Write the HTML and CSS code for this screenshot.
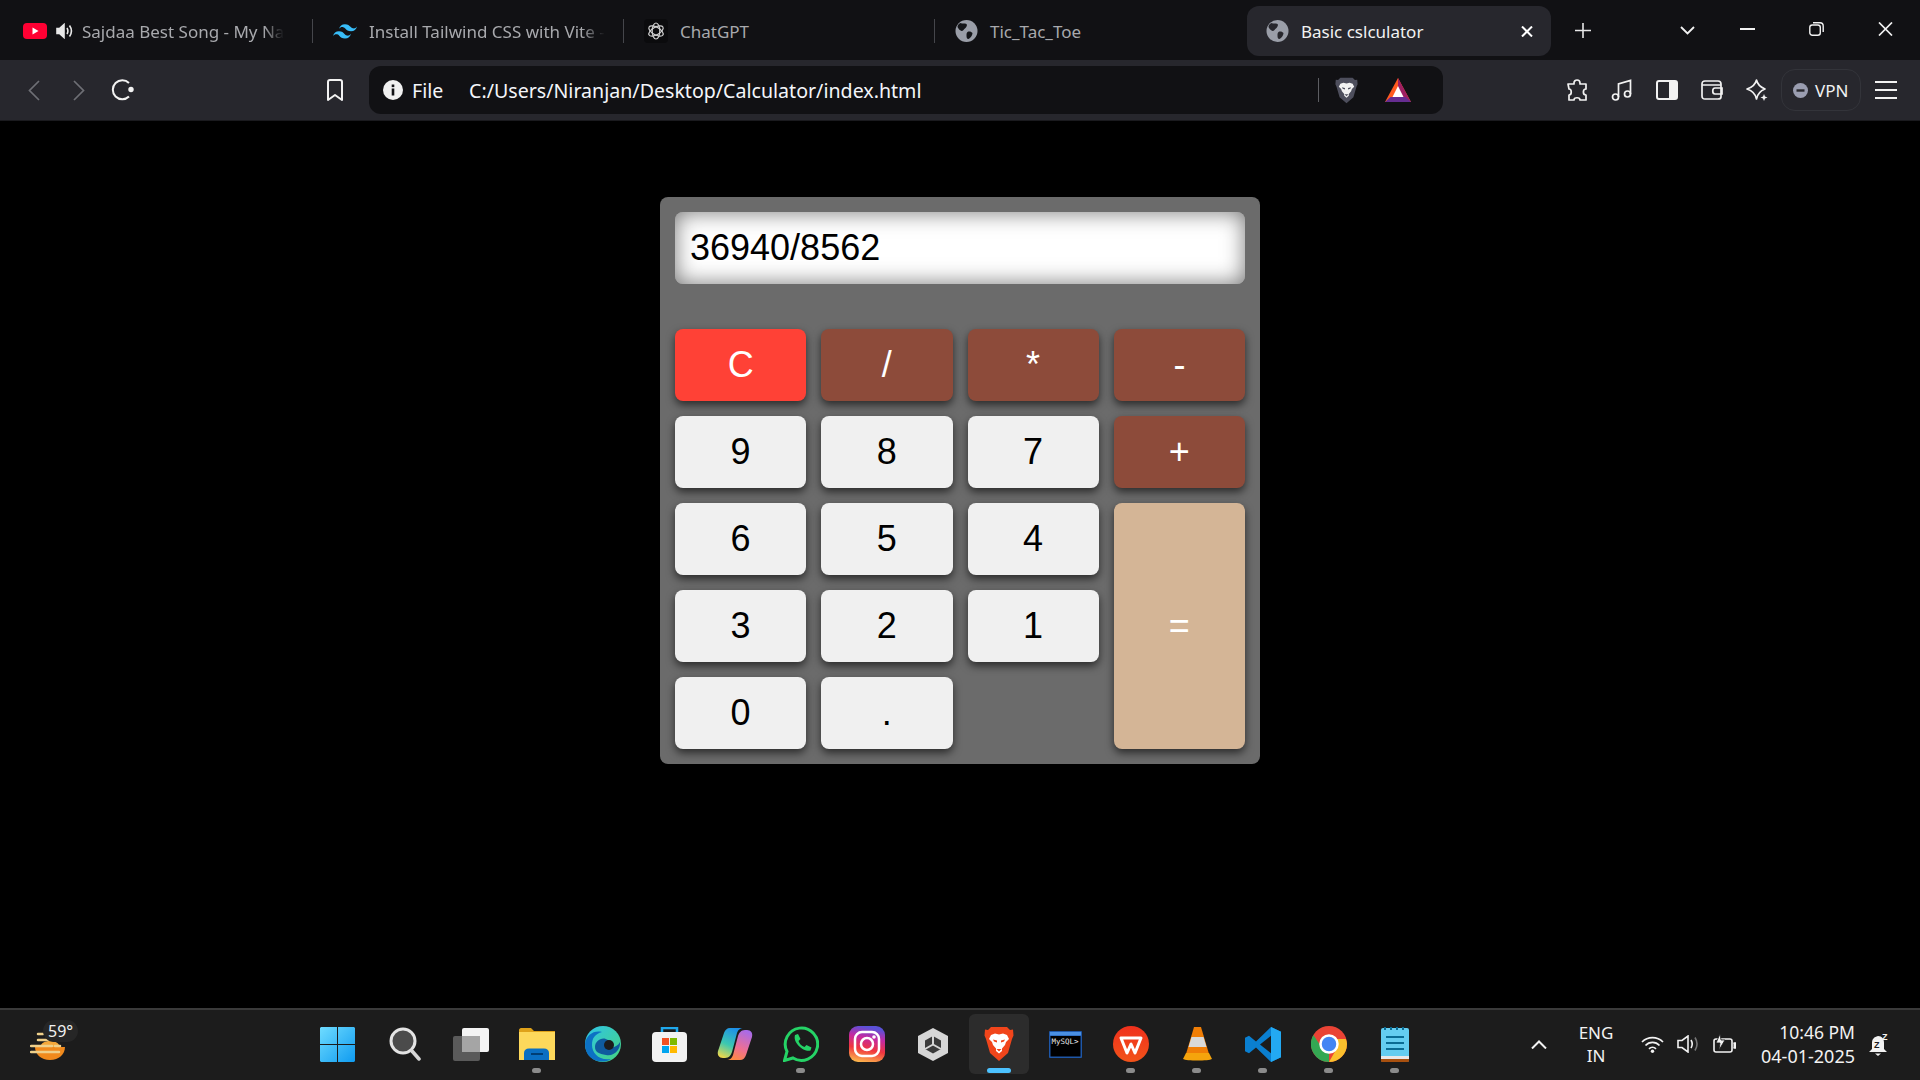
FILE: index.html
```html
<!DOCTYPE html>
<html lang="en">
<head>
  <meta charset="UTF-8">
  <title>Basic cslculator</title>
  <link rel="stylesheet" href="styles.css">
</head>
<body>
  <!-- browser tabs -->
  <header class="tabbar">
    <div class="tab">
      <svg class="favicon" width="24" height="16" viewBox="0 0 24 16"><rect width="24" height="16" rx="4" fill="#ff0033"/><path d="M9.500 4.500v7l6-3.500z" fill="#fff"/></svg>
      <svg class="speaker" width="18" height="16" viewBox="0 0 18 16" fill="none" stroke="#e8e8e8" stroke-width="1.600"><path d="M1 5.500h2.500L8 1.500v13l-4.500-4H1z" fill="#e8e8e8"/><path d="M11 5c1.200 2 1.200 4 0 6M13.500 2.500c2.400 3.400 2.400 7.600 0 11"/></svg>
      <span class="tab-title tab-fade">Sajdaa Best Song - My Na</span>
    </div>
    <div class="tab">
      <svg class="favicon" width="24" height="15" viewBox="0 0 54 33"><path fill="#38bdf8" d="M27 0c-7.200 0-11.700 3.600-13.500 10.800 2.700-3.600 5.850-4.950 9.450-4.050 2.054.513 3.522 2.004 5.147 3.653C30.744 13.090 33.808 16.200 40.500 16.200c7.200 0 11.700-3.600 13.500-10.800-2.700 3.600-5.850 4.950-9.450 4.050-2.054-.513-3.522-2.004-5.147-3.653C36.756 3.110 33.692 0 27 0zM13.500 16.200C6.300 16.200 1.800 19.800 0 27c2.700-3.600 5.850-4.950 9.450-4.050 2.054.514 3.522 2.004 5.147 3.653C17.244 29.290 20.308 32.400 27 32.400c7.200 0 11.700-3.600 13.500-10.800-2.700 3.600-5.850 4.950-9.450 4.050-2.054-.513-3.522-2.004-5.147-3.653C23.256 19.310 20.192 16.200 13.500 16.200z"/></svg>
      <span class="tab-title tab-fade">Install Tailwind CSS with Vite -</span>
    </div>
    <div class="tab">
      <svg class="favicon" width="24" height="24" viewBox="0 0 24 24" fill="none" stroke="#d0d0d0" stroke-width="1.200"><rect width="24" height="24" rx="4" fill="#0b0b0d" stroke="none"/><ellipse cx="12" cy="12" rx="3.800" ry="8"/><ellipse cx="12" cy="12" rx="3.800" ry="8" transform="rotate(60 12 12)"/><ellipse cx="12" cy="12" rx="3.800" ry="8" transform="rotate(120 12 12)"/></svg>
      <span class="tab-title">ChatGPT</span>
    </div>
    <div class="tab">
      <svg class="favicon" width="23" height="22" viewBox="0 0 22 22"><circle cx="11" cy="11" r="11" fill="#9a9ea8"/><path d="M5 3c2 1 4 0 6 1 1 1 0 3-1 4-2 1-2 3-4 3-2-1-3-2-4-4 0-2 1-3 3-4zM12 12c2-1 4 0 5 1 0 2-2 5-4 6-2 0-2-2-2-4 0-1 0-2 1-3z" fill="#15161a"/></svg>
      <span class="tab-title">Tic_Tac_Toe</span>
    </div>
    <div class="tab tab-active">
      <svg class="favicon" width="23" height="22" viewBox="0 0 22 22"><circle cx="11" cy="11" r="11" fill="#9a9ea8"/><path d="M5 3c2 1 4 0 6 1 1 1 0 3-1 4-2 1-2 3-4 3-2-1-3-2-4-4 0-2 1-3 3-4zM12 12c2-1 4 0 5 1 0 2-2 5-4 6-2 0-2-2-2-4 0-1 0-2 1-3z" fill="#27272d"/></svg>
      <span class="tab-title">Basic cslculator</span>
      <svg class="tab-close" width="12" height="11" viewBox="0 0 12 11" stroke="#fff" stroke-width="2"><path d="M1 .5l10 10M11 .5l-10 10"/></svg>
    </div>
    <svg class="new-tab" width="16" height="15" viewBox="0 0 16 15" stroke="#e8e8e8" stroke-width="1.600"><path d="M8 0v15M0 7.500h16"/></svg>
    <svg class="tab-list" width="15" height="9" viewBox="0 0 15 9" fill="none" stroke="#f2f2f2" stroke-width="1.800"><path d="M1 1l6.500 6.500L14 1"/></svg>
    <div class="win-controls">
      <svg width="15" height="2" viewBox="0 0 15 2"><rect width="15" height="2" fill="#f2f2f2"/></svg>
      <svg width="15" height="14" viewBox="0 0 15 14" fill="none" stroke="#f2f2f2" stroke-width="1.400"><rect x=".8" y="3" width="10.500" height="10.300" rx="2.500"/><path d="M4 .8h7c2 0 3.200 1.200 3.200 3.200v6"/></svg>
      <svg width="15" height="14" viewBox="0 0 15 14" stroke="#f2f2f2" stroke-width="1.700"><path d="M1 .5l13 13M14 .5l-13 13"/></svg>
    </div>
  </header>

  <!-- address bar row -->
  <nav class="toolbar">
    <svg class="nav-back" width="12" height="21" viewBox="0 0 12 21" fill="none" stroke="#6e6f75" stroke-width="1.700"><path d="M11 1L1.500 10.500 11 20"/></svg>
    <svg class="nav-forward" width="12" height="21" viewBox="0 0 12 21" fill="none" stroke="#6e6f75" stroke-width="1.700"><path d="M1 1l9.500 9.500L1 20"/></svg>
    <svg class="nav-reload" width="24" height="22" viewBox="0 0 24 22" fill="none" stroke="#f2f2f2" stroke-width="2"><path d="M18 17.500A9.500 9.500 0 1 1 18 4"/><circle cx="20" cy="10.500" r="2.700" fill="#f2f2f2" stroke="none"/></svg>
    <svg class="nav-bookmark" width="16" height="23" viewBox="0 0 16 23" fill="none" stroke="#f2f2f2" stroke-width="2"><path d="M3 1h10c1 0 2 1 2 2v18l-7-5-7 5V3c0-1 1-2 2-2z" stroke-linejoin="round"/></svg>
    <div class="addressbar">
      <svg class="info-icon" width="20" height="20" viewBox="0 0 20 20"><circle cx="10" cy="10" r="10" fill="#f0f0f0"/><rect x="8.700" y="8.500" width="2.600" height="7" fill="#111114"/><rect x="8.700" y="4.500" width="2.600" height="2.600" fill="#111114"/></svg>
      <span class="scheme">File</span>
      <span class="url">C:/Users/Niranjan/Desktop/Calculator/index.html</span>
      <span class="addr-sep"></span>
      <svg class="shield" width="23" height="27" viewBox="0 0 30 36" preserveAspectRatio="none"><path d="M7 1h16l3 3 3-.5.5 6L28 13l-4 14-9 8-9-8L2 13 .5 9.500 1 3.500 4 4z" fill="#4d4e5c"/><path d="M7 9l4-1.500 4 1 4-1 4 1.500 2 4-3 3-1 3-3 3.500v2.500l-3 2.500-3-2.500v-2.500L9 19l-1-3-3-3z" fill="#f2f2f2"/><path d="M9 13.500l4 1v2l-3-1zM21 13.500l-4 1v2l3-1zM12.500 23h5L15 25.500z" fill="#4d4e5c"/></svg>
      <svg class="bat" width="26" height="24" viewBox="0 0 26 24"><path d="M13 0L0 24h26z" fill="#ff5a1f"/><path d="M13 0l13 24H13z" fill="#9e1f63"/><path d="M0 24l5.500-5h15l5.500 5z" fill="#662d91"/><path d="M13 8l5.500 11h-11z" fill="#fff"/></svg>
    </div>
    <div class="tools">
      <svg width="22" height="22" viewBox="0 0 22 22" fill="none" stroke="#f2f2f2" stroke-width="1.700" stroke-linejoin="round"><path d="M8 4c0-4 6-4 6 0v1h6v5c-3.500 0-3.500 6 0 6v5h-6c0-3-6-3-6 0H3v-5c3 0 3-6 0-6L2 5h6z"/></svg>
      <svg width="22" height="22" viewBox="0 0 22 22" fill="none" stroke="#f2f2f2" stroke-width="1.700"><circle cx="4.500" cy="18" r="3"/><circle cx="16.500" cy="15" r="3"/><path d="M7.500 18V5l12-3.500V15"/></svg>
      <svg width="22" height="20" viewBox="0 0 22 20"><rect x="1" y="1" width="20" height="18" rx="2" fill="none" stroke="#f2f2f2" stroke-width="2"/><rect x="13" y="1" width="8" height="18" fill="#f2f2f2"/></svg>
      <svg width="22" height="20" viewBox="0 0 22 20" fill="none" stroke="#f2f2f2" stroke-width="1.700"><path d="M4 1h13c2 0 3 1 3 3v13c0 1-1 2-3 2H4c-2 0-3-1-3-3V4c0-2 1-3 3-3zM1 5h19M21 8h-7c-3 0-3 6 0 6h7z"/></svg>
      <svg width="22" height="22" viewBox="0 0 22 22" fill="none" stroke="#f2f2f2" stroke-width="1.700" stroke-linejoin="round"><path d="M10.500 1c1 4.500 3.500 7 8.500 9-5 2-7.500 4.500-8.500 10-1-5.500-3.500-8-9.500-10 6-2 8.500-4.500 9.500-9z"/><path d="M18 15l1 2.500 2.500 1-2.500 1-1 2.500-1-2.500-2.500-1 2.500-1z" fill="#f2f2f2" stroke="none"/></svg>
    </div>
    <div class="vpn-pill">
      <svg width="15" height="15" viewBox="0 0 15 15"><circle cx="7.500" cy="7.500" r="7.500" fill="#9a9db0"/><rect x="3.500" y="6.300" width="8" height="2.400" fill="#27272d"/></svg>
      <span>VPN</span>
    </div>
    <svg class="menu-icon" width="22" height="18" viewBox="0 0 22 18" stroke="#f2f2f2" stroke-width="2"><path d="M0 1h22M0 9h22M0 17h22"/></svg>
  </nav>

  <!-- the page itself -->
  <main class="page">
    <div class="calculator">
      <div class="display">36940/8562</div>
      <div class="keys">
        <button class="key key-clear">C</button>
        <button class="key key-op">/</button>
        <button class="key key-op">*</button>
        <button class="key key-op">-</button>
        <button class="key">9</button>
        <button class="key">8</button>
        <button class="key">7</button>
        <button class="key key-op">+</button>
        <button class="key">6</button>
        <button class="key">5</button>
        <button class="key">4</button>
        <button class="key key-equals">=</button>
        <button class="key">3</button>
        <button class="key">2</button>
        <button class="key">1</button>
        <button class="key">0</button>
        <button class="key">.</button>
      </div>
    </div>
  </main>

  <!-- windows taskbar -->
  <footer class="taskbar">
    <div class="weather">
      <svg width="36" height="29" viewBox="0 0 36 29"><path d="M5 15h30c0 7-6 13-15 13S5 22 5 15z" fill="#f08a1d"/><path d="M10 15c1-4 5-6 10-6s9 2 10 6z" fill="#f5a83a"/><g stroke="#efd08a" stroke-width="2.500" stroke-linecap="round"><path d="M8 2h5M8 8h10M1 14h21M1 20h28M25 14h5"/></g></svg>
      <span class="temp">59°</span>
    </div>
    <div class="apps">
      <div class="app app-start">
        <svg width="35" height="35" viewBox="0 0 35 35"><defs><linearGradient id="win" x1="0" y1="0" x2="1" y2="1"><stop offset="0" stop-color="#6fdcff"/><stop offset="1" stop-color="#0f9bf0"/></linearGradient></defs><path d="M1 0h16v17H0V1zM18 0h16l1 1v16H18zM0 18h17v17H1l-1-1zM18 18h17v16l-1 1H18z" fill="url(#win)"/></svg>
      </div>
      <div class="app">
        <svg width="32" height="34" viewBox="0 0 32 34"><circle cx="14" cy="14" r="12" fill="#4b4b4b" stroke="#e4e4e4" stroke-width="3"/><path d="M23 24l7 8" stroke="#d8d8d8" stroke-width="3.500" stroke-linecap="round"/></svg>
      </div>
      <div class="app">
        <svg width="36" height="33" viewBox="0 0 36 33"><rect y="8" width="27" height="25" rx="2" fill="#5a5a5a"/><rect x="9" width="27" height="24" rx="2" fill="#f4f4f4"/><rect x="9" y="8" width="18" height="16" fill="#a5a5a5"/></svg>
      </div>
      <div class="app app-open">
        <svg width="36" height="32" viewBox="0 0 36 32"><path d="M0 2c0-1 1-2 2-2h10l3 3h21v29H0z" fill="#dfa21a"/><rect y="4" width="36" height="28" fill="#fdd85b"/><path d="M5 32v-7c0-3 2-4.500 5-4.500h15c3 0 5 1.500 5 4.500v7z" fill="#0a6fc2"/><rect x="12" y="25" width="12" height="2" fill="#003e74"/></svg>
      </div>
      <div class="app">
        <svg width="36" height="36" viewBox="0 0 36 36"><defs><linearGradient id="edge" x1="0" y1="0" x2="1" y2="1"><stop offset="0" stop-color="#2fc4e8"/><stop offset="1" stop-color="#46d480"/></linearGradient></defs><circle cx="18" cy="18" r="18" fill="url(#edge)"/><path d="M0 18C1 9 9 4 17 6c-7 2-10 6-10 13 0 8 7 16 19 14-9 6-26 2-26-15z" fill="#0c71c4"/><path d="M10 21c0-7 8-11 13-7 3 2 3 6 1 7 5 1 9-1 11-5 1 7-6 15-14 13-7-1-11-3-11-8z" fill="#0f5b9e"/><circle cx="24" cy="19" r="5" fill="#1c1c1c"/></svg>
      </div>
      <div class="app">
        <svg width="35" height="35" viewBox="0 0 35 35"><path d="M10 5V1h15v4" fill="none" stroke="#1fa8ec" stroke-width="2.500"/><rect y="5" width="35" height="30" rx="4" fill="#f2f2f2"/><rect x="10" y="11" width="7" height="7" fill="#f25022"/><rect x="18" y="11" width="7" height="7" fill="#7fba00"/><rect x="10" y="19" width="7" height="7" fill="#00a4ef"/><rect x="18" y="19" width="7" height="7" fill="#ffb900"/></svg>
      </div>
      <div class="app">
        <svg width="36" height="34" viewBox="0 0 36 34"><defs><linearGradient id="cop1" x1=".6" y1="0" x2=".2" y2="1"><stop offset="0" stop-color="#1e90e8"/><stop offset=".55" stop-color="#3cc8b0"/><stop offset="1" stop-color="#f0d84a"/></linearGradient><linearGradient id="cop2" x1=".7" y1="0" x2=".3" y2="1"><stop offset="0" stop-color="#a86be8"/><stop offset=".6" stop-color="#f07090"/><stop offset="1" stop-color="#ff8a40"/></linearGradient></defs><path d="M13 1h14c-4 0-6 2-7 5l-5 19c-1 3-3 6-7 6H6c-4 0-6-3-5-7L7 6c1-3 3-5 6-5z" fill="url(#cop1)"/><path d="M23 33H9c4 0 6-2 7-5l5-19c1-3 3-6 7-6h2c4 0 6 3 5 7l-6 18c-1 3-3 5-6 5z" fill="url(#cop2)"/></svg>
      </div>
      <div class="app app-open">
        <svg width="36" height="36" viewBox="0 0 36 36"><path d="M1.500 34.500l2.500-9A16.200 16.200 0 1 1 10 32z" fill="none" stroke="#25d366" stroke-width="3"/><path d="M12 9l3-1 2.500 5-2 2c1 3 3 5 6 6l2-2 5 2.500-1 3c-6 2-18-7-15.500-15.500z" fill="#25d366"/></svg>
      </div>
      <div class="app">
        <svg width="36" height="36" viewBox="0 0 36 36"><defs><linearGradient id="ig" x1=".15" y1="1" x2=".35" y2="0"><stop offset="0" stop-color="#fdc04d"/><stop offset=".4" stop-color="#f0353f"/><stop offset=".72" stop-color="#c32aa3"/><stop offset="1" stop-color="#5b51d8"/></linearGradient></defs><rect width="36" height="36" rx="9" fill="url(#ig)"/><rect x="6" y="6" width="24" height="24" rx="7" fill="none" stroke="#fff" stroke-width="2.500"/><circle cx="18" cy="18" r="6" fill="none" stroke="#fff" stroke-width="2.500"/><circle cx="25" cy="11" r="1.800" fill="#fff"/></svg>
      </div>
      <div class="app">
        <svg width="30" height="33" viewBox="0 0 30 33"><path d="M15 0l15 8v17l-15 8-15-8V8z" fill="#d6d6d6"/><path d="M15 8l8 4.500v8.500l-8 4.500L7 21v-8.500z" fill="#3a3a3a"/><path d="M15 8v8.500l8 4.500M15 16.500L7 21" stroke="#d6d6d6" stroke-width="2" fill="none"/></svg>
      </div>
      <div class="app app-active">
        <svg width="30" height="36" viewBox="0 0 30 36"><path d="M7 1h16l3 3 3-.5.5 6L28 13l-4 14-9 8-9-8L2 13 .5 9.500 1 3.500 4 4z" fill="#f1451b"/><path d="M7 9l4-1.500 4 1 4-1 4 1.500 2 4-3 3-1 3-3 3.500v2.500l-3 2.500-3-2.500v-2.500L9 19l-1-3-3-3z" fill="#fff"/><path d="M9 13.500l4 1v2l-3-1zM21 13.500l-4 1v2l3-1zM12.500 23h5L15 25.500z" fill="#f1451b"/></svg>
      </div>
      <div class="app">
        <svg width="33" height="27" viewBox="0 0 33 27"><rect width="33" height="27" rx="1" fill="#1e57a8"/><rect x="1" y="1" width="31" height="3.500" fill="#4a90e2"/><rect x="1.500" y="5" width="30" height="20.500" fill="#000"/><text x="2.500" y="13" class="mysql-text">MySQL&gt;</text></svg>
      </div>
      <div class="app app-open">
        <svg width="36" height="36" viewBox="0 0 36 36"><defs><linearGradient id="wps" x1="0" y1="0" x2="0" y2="1"><stop offset="0" stop-color="#f0301c"/><stop offset="1" stop-color="#f2531a"/></linearGradient></defs><circle cx="18" cy="18" r="18" fill="url(#wps)"/><path d="M8 12h20l-6 15-4-9-4 9z" fill="none" stroke="#fff" stroke-width="3" stroke-linejoin="round"/></svg>
      </div>
      <div class="app app-open">
        <svg width="29" height="34" viewBox="0 0 29 34"><path d="M11 0h7l8 27H3z" fill="#f07e06"/><path d="M8.500 10h12l3 10h-18z" fill="#d9d9d9"/><path d="M3 26h23l3 6c-3 2-26 2-29 0z" fill="#f5a40c"/></svg>
      </div>
      <div class="app app-open">
        <svg width="36" height="35" viewBox="0 0 36 36" preserveAspectRatio="none"><path d="M26 0l10 5v26l-10 5L11 21l-7 6-4-2V11l4-2 7 6z" fill="#0a7fd0"/><path d="M26 9L15 18l11 9z" fill="#1c1c1c"/><path d="M26 0l10 5v26l-10 5z" fill="#23a9f2"/></svg>
      </div>
      <div class="app app-open">
        <svg width="36" height="36" viewBox="0 0 36 36"><circle cx="18" cy="18" r="18" fill="#ea4335"/><path d="M18 36A18 18 0 0 1 2.400 9L11 22l7 5z" fill="#34a853"/><path d="M36 18a18 18 0 0 1-18 18l8-14v-9h8.800c.8 1.600 1.200 3.200 1.200 5z" fill="#fbc02d"/><circle cx="18" cy="18" r="8.500" fill="#4285f4" stroke="#fff" stroke-width="2.500"/></svg>
      </div>
      <div class="app app-open">
        <svg width="28" height="35" viewBox="0 0 28 35"><rect y="1" width="28" height="34" rx="2" fill="#64cdf0"/><rect y="31" width="28" height="4" rx="1" fill="#a8500f"/><rect y="29" width="28" height="3" fill="#e8e8e8"/><path d="M5 10h18M5 16h18M5 22h18" stroke="#0a6c94" stroke-width="2"/><path d="M4 0v3M10 0v3M16 0v3M22 0v3" stroke="#0a6c94" stroke-width="2"/></svg>
      </div>
    </div>
    <div class="tray">
      <svg class="tray-caret" width="16" height="9" viewBox="0 0 16 9" fill="none" stroke="#f2f2f2" stroke-width="2"><path d="M1 8.500l7-7 7 7"/></svg>
      <div class="lang"><span>ENG</span><span>IN</span></div>
      <svg width="23" height="17" viewBox="0 0 23 17" fill="none" stroke="#f2f2f2" stroke-width="1.700"><path d="M1 6a15 15 0 0 1 21 0M4.500 9.500a9.500 9.500 0 0 1 14 0M8 12.800a5 5 0 0 1 7 0"/><circle cx="11.500" cy="15.300" r="1.700" fill="#f2f2f2" stroke="none"/></svg>
      <svg class="tray-icon" width="23" height="18" viewBox="0 0 23 18" fill="none" stroke="#f2f2f2" stroke-width="1.600"><path d="M1 5.500h4l6-4.500v16l-6-4.500H1z"/><path d="M14 5c1.500 2.500 1.500 5.500 0 8"/><path d="M18 2.500c2.500 4 2.500 9 0 13" stroke="#777"/></svg>
      <svg class="tray-icon" width="23" height="20" viewBox="0 0 23 20" fill="none" stroke="#f2f2f2" stroke-width="1.600"><rect x="1" y="5" width="18" height="13" rx="2"/><path d="M20.500 9h2v5h-2" fill="#f2f2f2"/><path d="M7 0L3 9h4l-1 7 6-10H8z" fill="#f2f2f2" stroke="#1c1c1c" stroke-width=".8"/></svg>
      <div class="clock"><span class="clock-time">10:46 PM</span><span>04-01-2025</span></div>
      <svg class="bell" width="20" height="23" viewBox="0 0 20 23"><path d="M9 3C5 4 3 6 3 10v6l-3 3h18l-3-3v-6c0-4-2-7-6-7z" fill="#f2f2f2"/><path d="M6 20.500h6l-3 2.500z" fill="#f2f2f2"/><text x="5" y="15" class="bell-z">Z</text><text x="13" y="7" class="bell-z bell-z-top">Z</text></svg>
    </div>
  </footer>
</body>
</html>
```

FILE: styles.css
```css
* {
  box-sizing: border-box;
}

html, body {
  height: 100%;
}

body {
  margin: 0;
  display: flex;
  flex-direction: column;
  height: 1080px;
  overflow: hidden;
  background: #000;
  font-family: "Noto Sans", "Open Sans", sans-serif;
  color: #f2f2f2;
}

svg {
  display: block;
  flex: none;
}

/* tabs */
.tabbar {
  display: flex;
  align-items: center;
  height: 60px;
  padding-left: 2px;
  background: #111114;
}

.tab {
  display: flex;
  align-items: center;
  width: 311px;
  height: 50px;
  margin-top: 2px;
  padding-left: 20px;
  position: relative;
  font-size: 17px;
  color: #a8a9ad;
}

.tab:first-child {
  padding-left: 21px;
}

.tab + .tab::before {
  content: "";
  position: absolute;
  left: -1px;
  top: 13px;
  height: 24px;
  width: 1px;
  background: #45464b;
}

.tab-active {
  width: 304px;
  margin-left: 1px;
  padding-left: 19px;
  border-radius: 12px;
  background: #27272d;
  color: #f2f2f2;
}

.tab.tab-active::before {
  display: none;
}

.favicon {
  margin-right: 12px;
}

.speaker {
  margin: 0 8px 0 -3px;
}

.tab-title {
  white-space: nowrap;
}

.tab-fade {
  -webkit-mask-image: linear-gradient(to right, #000 90%, transparent);
  mask-image: linear-gradient(to right, #000 90%, transparent);
}

.tab-close {
  margin-left: auto;
  margin-right: 18px;
}

.new-tab {
  margin-left: 24px;
}

.tab-list {
  margin-left: 89px;
}

.win-controls {
  display: flex;
  align-items: center;
  gap: 54px;
  margin-left: 45px;
  margin-bottom: 2px;
}

/* toolbar */
.toolbar {
  display: flex;
  align-items: center;
  height: 61px;
  padding-left: 28px;
  border-bottom: 1px solid #1a1a1e;
  background: #27272d;
}

.nav-forward {
  margin-left: 33px;
}

.nav-reload {
  margin-left: 26px;
}

.nav-bookmark {
  margin-left: 192px;
}

.addressbar {
  display: flex;
  align-items: center;
  width: 1074px;
  height: 48px;
  margin-left: 26px;
  padding-left: 14px;
  border-radius: 12px;
  background: #111114;
  font-size: 19.600px;
  color: #f4f6fa;
}

.scheme {
  width: 57px;
  margin-left: 9px;
}

.url {
  width: 849px;
  white-space: nowrap;
}

.addr-sep {
  width: 1px;
  height: 24px;
  background: #5d5e63;
}

.shield {
  margin-left: 16px;
}

.bat {
  margin-left: 27px;
}

.tools {
  display: flex;
  align-items: center;
  gap: 23px;
  margin-left: 123px;
}

.vpn-pill {
  display: flex;
  align-items: center;
  gap: 7px;
  width: 80px;
  height: 42px;
  margin-left: 13px;
  padding-left: 11px;
  border: 1px solid #33343a;
  border-radius: 14px;
  font-size: 17px;
}

.menu-icon {
  margin-left: 14px;
}

/* calculator */
.page {
  flex: 1;
  padding-top: 76px;
  background: #000;
}

.calculator {
  width: 600px;
  margin: 0 auto;
  padding: 15px;
  border-radius: 8px;
  background: #6b6b6b;
}

.display {
  height: 72px;
  margin-bottom: 45px;
  padding: 0 15px;
  border-radius: 8px;
  background: #fff;
  box-shadow: inset 0 0 22px rgba(0, 0, 0, 0.55);
  font-family: "Liberation Sans", Arial, sans-serif;
  font-size: 36px;
  line-height: 72px;
  color: #000;
}

.keys {
  display: grid;
  grid-template-columns: repeat(4, 1fr);
  grid-auto-rows: 72px;
  gap: 15px;
}

.key {
  padding: 0;
  border: none;
  border-radius: 8px;
  background: #f0f0f0;
  box-shadow: 0 4px 9px rgba(0, 0, 0, 0.6);
  font-family: "Liberation Sans", Arial, sans-serif;
  font-size: 36px;
  color: #000;
}

.key-clear {
  background: #ff4136;
  color: #fff;
}

.key-op {
  background: #8d4b3a;
  color: #fff;
}

.key-equals {
  grid-row: span 3;
  background: #d4b596;
  color: #fff;
}

/* taskbar */
.taskbar {
  display: flex;
  align-items: center;
  height: 72px;
  padding-bottom: 2px;
  border-top: 2px solid #3a3a3a;
  background: #1c1c1c;
}

.weather {
  position: relative;
  width: 306px;
  padding: 5px 0 0 30px;
}

.temp {
  position: absolute;
  left: 43px;
  top: -7px;
  padding: 0 5px;
  border-radius: 12px;
  background: #262626;
  font-size: 16px;
  line-height: 22px;
}

.apps {
  display: flex;
}

.app {
  position: relative;
  display: flex;
  align-items: center;
  justify-content: center;
  width: 66px;
  height: 60px;
}

.app-start {
  margin: 0 2px 0 -2px;
}

.app-open::after,
.app-active::after {
  content: "";
  position: absolute;
  left: 28px;
  bottom: 1px;
  width: 9px;
  height: 5px;
  border-radius: 3px;
  background: #8b8b8b;
}

.app-active {
  width: 60px;
  margin: 0 3px;
  border-radius: 6px;
  background: #2c2c2c;
}

.app-active::after {
  left: 18px;
  width: 24px;
  background: #4cc2ff;
}

.mysql-text {
  font-family: "DejaVu Sans Mono", monospace;
  font-size: 7.500px;
  fill: #e8e8e8;
}

.tray {
  display: flex;
  align-items: center;
  margin-left: 103px;
  font-size: 17px;
}

.lang {
  display: flex;
  flex-direction: column;
  align-items: center;
  width: 46px;
  margin: 0 22px 0 26px;
  line-height: 23.500px;
}

.tray-icon {
  margin-left: 13px;
}

.clock {
  display: flex;
  flex-direction: column;
  align-items: flex-end;
  width: 119px;
  line-height: 24px;
  font-size: 18px;
}

.clock-time {
  font-size: 17.500px;
}

.bell {
  margin-left: 14px;
}

.bell-z {
  font-family: "Liberation Sans", sans-serif;
  font-size: 9px;
  font-weight: bold;
  fill: #1c1c1c;
}

.bell-z-top {
  fill: #f2f2f2;
}
```
